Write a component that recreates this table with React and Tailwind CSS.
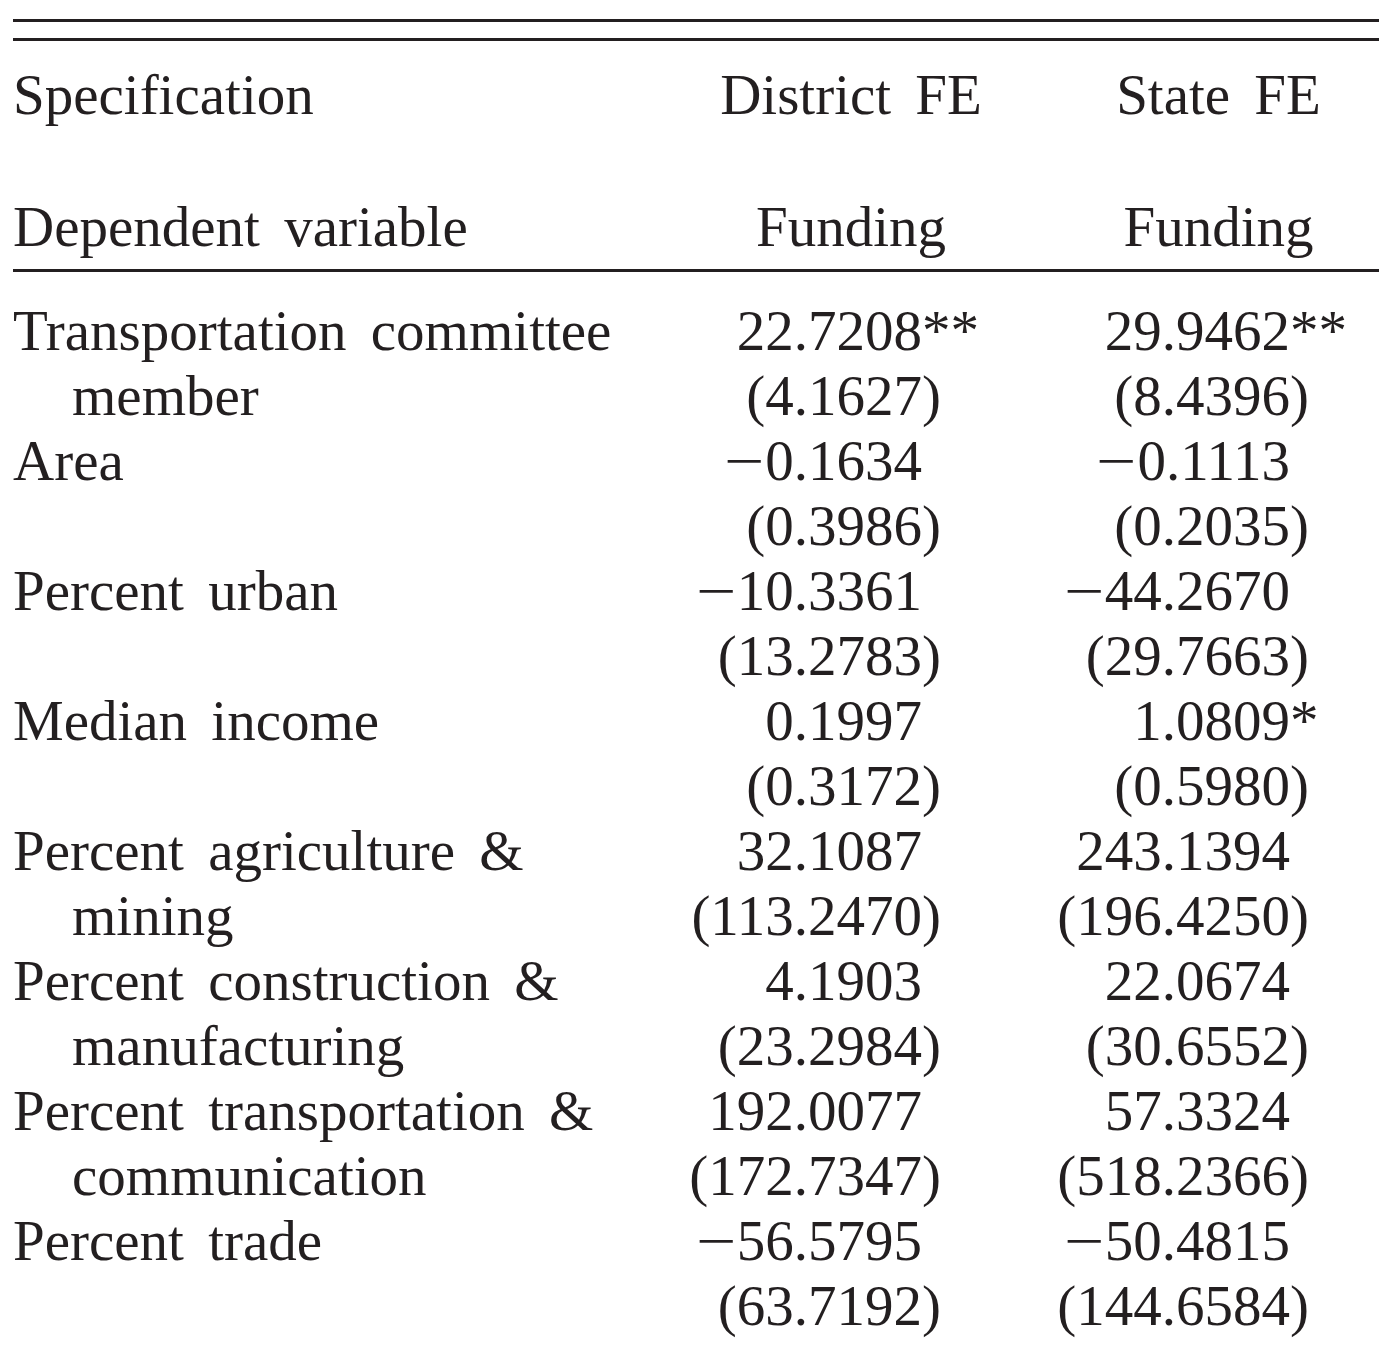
const ROWS = [
  { label: ['Transportation committee', 'member'], a: ['22.7208', '**', '4.1627'], b: ['29.9462', '**', '8.4396'] },
  { label: ['Area', ''], a: ['−0.1634', '', '0.3986'], b: ['−0.1113', '', '0.2035'] },
  { label: ['Percent urban', ''], a: ['−10.3361', '', '13.2783'], b: ['−44.2670', '', '29.7663'] },
  { label: ['Median income', ''], a: ['0.1997', '', '0.3172'], b: ['1.0809', '*', '0.5980'] },
  { label: ['Percent agriculture &', 'mining'], a: ['32.1087', '', '113.2470'], b: ['243.1394', '', '196.4250'] },
  { label: ['Percent construction &', 'manufacturing'], a: ['4.1903', '', '23.2984'], b: ['22.0674', '', '30.6552'] },
  { label: ['Percent transportation &', 'communication'], a: ['192.0077', '', '172.7347'], b: ['57.3324', '', '518.2366'] },
  { label: ['Percent trade', ''], a: ['−56.5795', '', '63.7192'], b: ['−50.4815', '', '144.6584'] },
];

const grid = 'grid grid-cols-[660px_249px_117px_251px_89px] h-[65px] leading-[65px] whitespace-nowrap';

// wide TeX-style minus, a bit of air before the digits
function Num({ v }) {
  if (v.startsWith('−')) {
    return (
      <>
        <span className="inline-block w-[41px] text-left">
          <span className="inline-block origin-left scale-x-125">−</span>
        </span>
        {v.slice(1)}
      </>
    );
  }
  return v;
}

function Estimate({ row }) {
  return (
    <>
      <div className={grid}>
        <div>{row.label[0]}</div>
        <div className="text-right"><Num v={row.a[0]} /></div>
        <div>{row.a[1]}</div>
        <div className="text-right"><Num v={row.b[0]} /></div>
        <div>{row.b[1]}</div>
      </div>
      <div className={grid}>
        <div className="pl-[59px]">{row.label[1]}</div>
        <div className="text-right">({row.a[2]}</div>
        <div>)</div>
        <div className="text-right">({row.b[2]}</div>
        <div>)</div>
      </div>
    </>
  );
}

export default function App() {
  return (
    <div className="h-[1350px] w-[1379px] overflow-hidden bg-white pl-[13px] text-[57px] text-[#231f20] font-['Liberation_Serif','Times_New_Roman',serif] [word-spacing:10px]">
      <div className="mt-[19px] h-[3px] bg-[#231f20]" />
      <div className="mt-[16px] h-[3px] bg-[#231f20]" />
      <div className="pt-[21px]">
        <div className={grid}>
          <div>Specification</div>
          <div className="col-span-2 pr-[10px] text-center">District FE</div>
          <div className="col-span-2 pl-[19px] text-center">State FE</div>
        </div>
        <div className={`${grid} mt-[67px]`}>
          <div>Dependent variable</div>
          <div className="col-span-2 pr-[10px] text-center">Funding</div>
          <div className="col-span-2 pl-[19px] text-center">Funding</div>
        </div>
      </div>
      <div className="mt-[10px] h-[3px] bg-[#231f20]" />
      <div className="pt-[26px]">
        {ROWS.map((row) => (
          <Estimate key={row.label[0]} row={row} />
        ))}
      </div>
    </div>
  );
}
